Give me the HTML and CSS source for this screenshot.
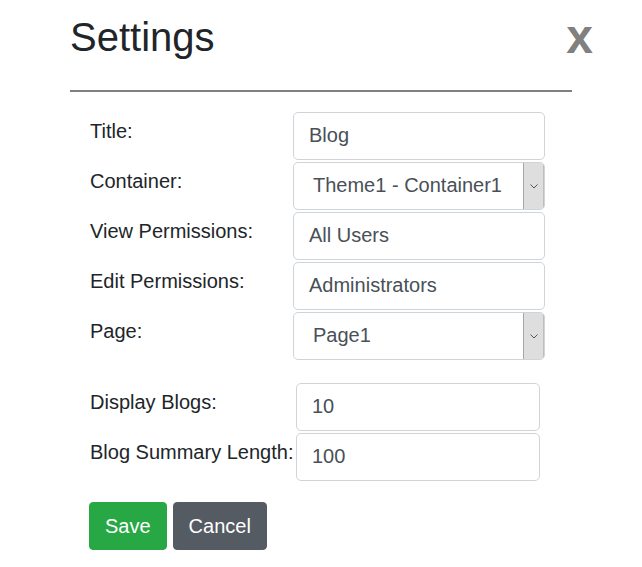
FILE: index.html
```html
<!DOCTYPE html>
<html>
<head>
<meta charset="utf-8">
<link rel="stylesheet" href="styles.css">
</head>
<body>
<div class="modal">
  <div class="header">
    <h1 class="title">Settings</h1>
    <span class="close">x</span>
  </div>
  <hr class="rule">
  <div class="form">
    <div class="grid grid-main">
      <label class="label">Title:</label>
      <div class="input">Blog</div>
      <label class="label">Container:</label>
      <div class="select"><span class="select-text">Theme1 - Container1</span><span class="arrow"><svg width="8" height="5" viewBox="0 0 8 5"><polyline points="0.5,0.5 4,4 7.5,0.5" fill="none" stroke="#555" stroke-width="1"/></svg></span></div>
      <label class="label">View Permissions:</label>
      <div class="input">All Users</div>
      <label class="label">Edit Permissions:</label>
      <div class="input">Administrators</div>
      <label class="label">Page:</label>
      <div class="select"><span class="select-text">Page1</span><span class="arrow"><svg width="8" height="5" viewBox="0 0 8 5"><polyline points="0.5,0.5 4,4 7.5,0.5" fill="none" stroke="#555" stroke-width="1"/></svg></span></div>
    </div>
    <div class="grid grid-extra">
      <label class="label">Display Blogs:</label>
      <div class="input">10</div>
      <label class="label">Blog Summary Length:</label>
      <div class="input">100</div>
    </div>
    <div class="actions">
      <button class="btn btn-save">Save</button>
      <button class="btn btn-cancel">Cancel</button>
    </div>
  </div>
</div>
</body>
</html>
```
FILE: styles.css
```css
* { box-sizing: border-box; }
html, body { margin: 0; padding: 0; background: #fff; }
body { font-family: "Liberation Sans", Arial, sans-serif; color: #212529; }

.modal { padding: 13px 0 0 70px; }

.header { display: flex; align-items: flex-start; width: 523px; }
.title { margin: 0; font-size: 40px; line-height: 48px; font-weight: 400; color: #212529; }
.close { margin-left: auto; font-size: 48px; line-height: 48px; font-weight: 700; color: #808080; }

.rule { border: none; height: 2px; background: #808080; margin: 29px 0 0; width: 502px; }

.form { padding: 20px 0 0 20px; }

.grid { display: grid; grid-auto-rows: 48px; row-gap: 2px; column-gap: 2px; }
.grid-main { grid-template-columns: 201px 252px; }
.grid-extra { grid-template-columns: 204px 244px; margin-top: 23px; }

.label { font-size: 20px; line-height: 30px; padding-top: 4px; white-space: nowrap; color: #212529; }

.input {
  border: 1px solid #ced4da; border-radius: 5px; background: #fff;
  padding: 8px 15px; font-size: 20px; line-height: 29px; color: #495057;
}

.select {
  display: flex; border: 1px solid #ced4da; border-radius: 5px; background: #fff;
  font-size: 20px; color: #495057; overflow: hidden;
}
.select-text { flex: 1; padding: 8px 19px; line-height: 29px; }
.arrow {
  width: 21px; margin: 0; background: #dedede; border-left: 1px solid #a6a6a6;
  border-right: 1px solid #bdbdbd; display: flex; align-items: center; justify-content: center;
}

.actions { display: flex; gap: 6px; margin: 21px 0 0 -1px; }
.btn {
  font-family: "Liberation Sans", Arial, sans-serif; font-size: 20px; line-height: 30px;
  padding: 8px 15px; border: 1px solid transparent; border-radius: 4px; color: #fff;
}
.btn-save { background: #28a745; border-color: #28a745; }
.btn-cancel { background: #545b62; border-color: #545b62; }
```
